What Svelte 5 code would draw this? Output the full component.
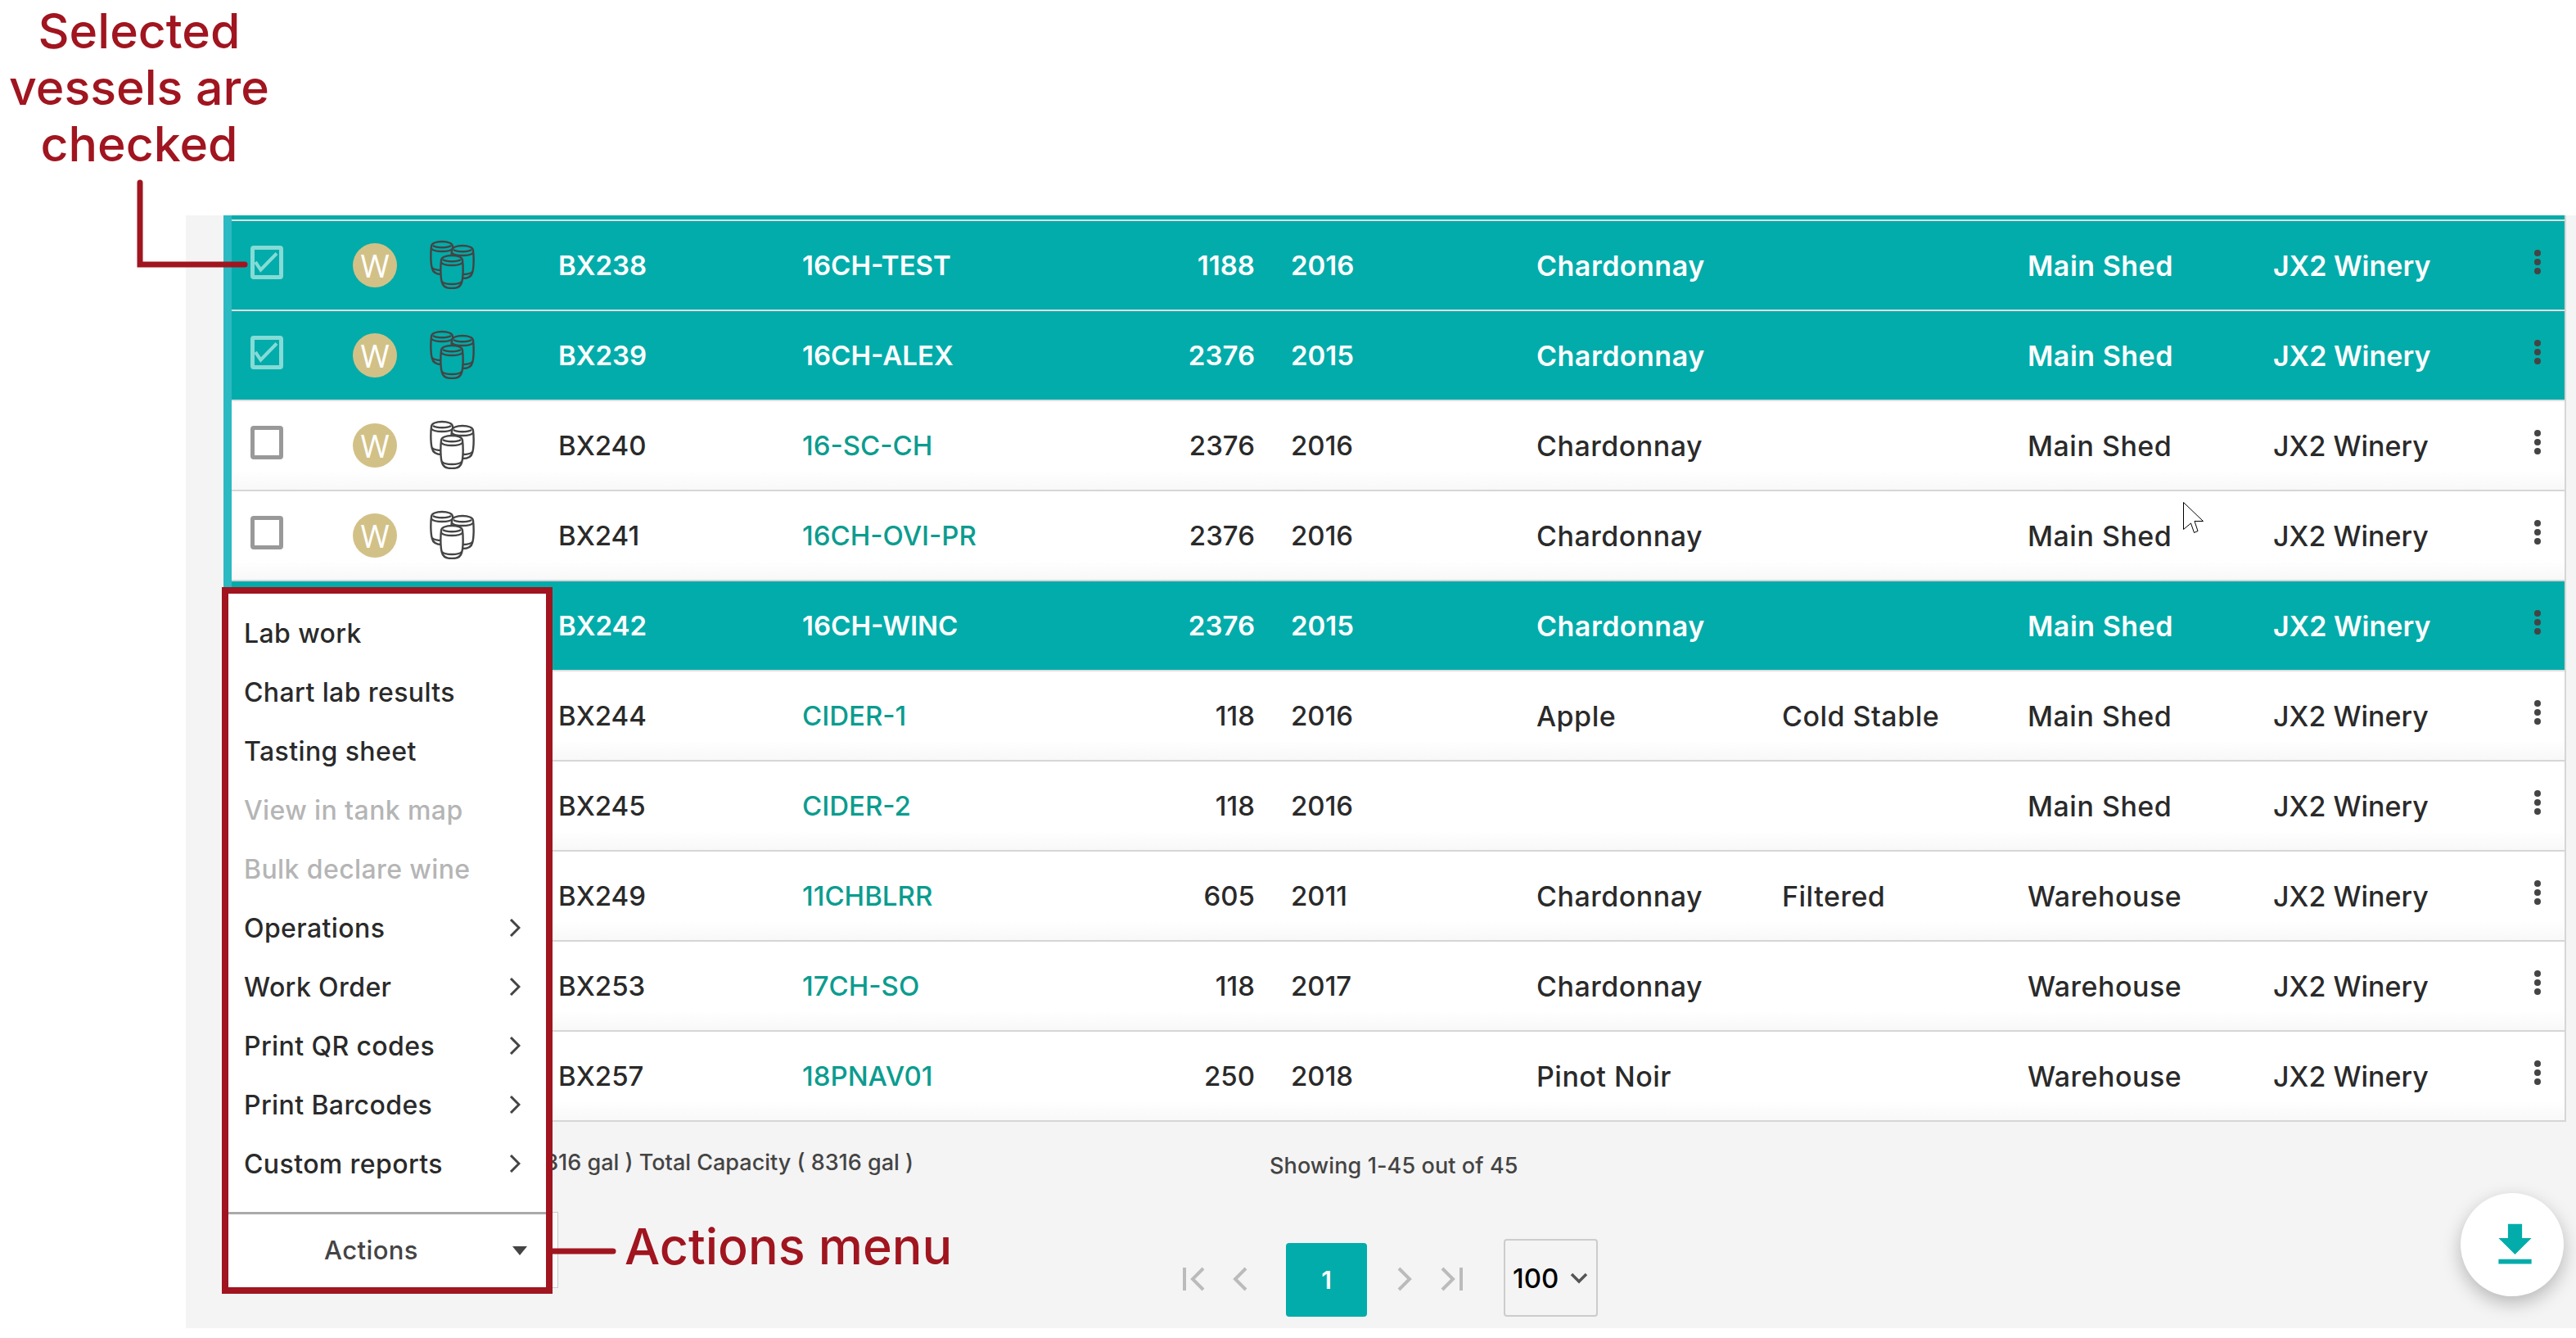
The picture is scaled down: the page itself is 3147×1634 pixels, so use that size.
<script>
  const vessels = [
    { id: 'BX238', name: '16CH-TEST', qty: 1188, year: 2016, variety: 'Chardonnay', state: '', place: 'Main Shed', sel: true },
    { id: 'BX239', name: '16CH-ALEX', qty: 2376, year: 2015, variety: 'Chardonnay', state: '', place: 'Main Shed', sel: true },
    { id: 'BX240', name: '16-SC-CH', qty: 2376, year: 2016, variety: 'Chardonnay', state: '', place: 'Main Shed' },
    { id: 'BX241', name: '16CH-OVI-PR', qty: 2376, year: 2016, variety: 'Chardonnay', state: '', place: 'Main Shed' },
    { id: 'BX242', name: '16CH-WINC', qty: 2376, year: 2015, variety: 'Chardonnay', state: '', place: 'Main Shed', sel: true },
    { id: 'BX244', name: 'CIDER-1', qty: 118, year: 2016, variety: 'Apple', state: 'Cold Stable', place: 'Main Shed' },
    { id: 'BX245', name: 'CIDER-2', qty: 118, year: 2016, variety: '', state: '', place: 'Main Shed' },
    { id: 'BX249', name: '11CHBLRR', qty: 605, year: 2011, variety: 'Chardonnay', state: 'Filtered', place: 'Warehouse' },
    { id: 'BX253', name: '17CH-SO', qty: 118, year: 2017, variety: 'Chardonnay', state: '', place: 'Warehouse' },
    { id: 'BX257', name: '18PNAV01', qty: 250, year: 2018, variety: 'Pinot Noir', state: '', place: 'Warehouse' }
  ];

  const menuItems = [
    { label: 'Lab work' },
    { label: 'Chart lab results' },
    { label: 'Tasting sheet' },
    { label: 'View in tank map', off: true },
    { label: 'Bulk declare wine', off: true },
    { label: 'Operations', sub: true },
    { label: 'Work Order', sub: true },
    { label: 'Print QR codes', sub: true },
    { label: 'Print Barcodes', sub: true },
    { label: 'Custom reports', sub: true }
  ];

  // offsets of the three barrels inside the icon
  const barrels = [[0, 1], [25, 6], [12, 18]];
</script>

<div class="page">
  <div class="panel">
    <div class="table">
      <div class="band"></div>
      {#each vessels as v}
        <div class="row" class:sel={v.sel}>
          <div class="cell-check">
            <span class="check">
              {#if v.sel}
                <svg width="40" height="41" viewBox="0 0 40 41"><path d="M6 20l6.500 9.500L32 9.500" /></svg>
              {/if}
            </span>
          </div>
          <div><span class="badge">W</span></div>
          <div>
            <svg class="barrels" width="55" height="60" viewBox="0 0 55 60">
              {#each barrels as [x, y]}
                <g transform="translate({x} {y})">
                  <path d="M2 7C1 15 1 28 3 34C4 39 9 41 15 41C21 41 26 39 27 34C29 28 29 15 28 7C28 3 22 1 15 1C8 1 2 3 2 7Z" />
                  <path d="M2.500 10C6 14 24 14 27.500 10M3 33C7 37 23 37 27 33M4 6C8 9 22 9 26 6" />
                </g>
              {/each}
            </svg>
          </div>
          <div class="num">{v.id}</div>
          <div class="name num">{v.name}</div>
          <div class="num qty">{v.qty}</div>
          <div class="num">{v.year}</div>
          <div>{v.variety}</div>
          <div>{v.state}</div>
          <div>{v.place}</div>
          <div class="owner">JX2 Winery</div>
          <div class="cell-dots">
            <svg width="8" height="30" viewBox="0 0 8 30"><circle cx="4" cy="4" r="4" /><circle cx="4" cy="15" r="4" /><circle cx="4" cy="26" r="4" /></svg>
          </div>
        </div>
      {/each}
    </div>

    <div class="summary">
      <div class="total">( 8316 gal ) Total Capacity ( 8316 gal )</div>
      <div class="showing">Showing 1-45 out of 45</div>
    </div>

    <div class="pager">
      <svg class="pg first" width="27" height="30" viewBox="0 0 27 30"><path d="M2 1v28M25 2L12 15l13 13" /></svg>
      <svg class="pg prev" width="18" height="30" viewBox="0 0 18 30"><path d="M16 2L3 15l13 13" /></svg>
      <div class="current">1</div>
      <svg class="pg next" width="18" height="30" viewBox="0 0 18 30"><path d="M2 2l13 13L2 28" /></svg>
      <svg class="pg last" width="27" height="30" viewBox="0 0 27 30"><path d="M25 1v28M2 2l13 13L2 28" /></svg>
      <div class="size">100
        <svg width="22" height="14" viewBox="0 0 22 14"><path d="M2 2l9 9 9-9" /></svg>
      </div>
    </div>

    <button class="fab" aria-label="Download">
      <svg width="69" height="69" viewBox="0 0 24 24"><path d="M19 9h-4V3H9v6H5l7 7 7-7zM5 18v2h14v-2H5z" /></svg>
    </button>
  </div>

  <div class="actions">
    <ul class="menu">
      {#each menuItems as item}
        <li class:off={item.off}>
          {item.label}
          {#if item.sub}
            <svg width="14" height="22" viewBox="0 0 14 22"><path d="M2 1l10 10L2 21" /></svg>
          {/if}
        </li>
      {/each}
    </ul>
    <div class="actions-btn">
      <span>Actions</span>
      <svg width="18" height="11" viewBox="0 0 18 11"><path d="M0 0h18L9 11z" /></svg>
    </div>
  </div>

  <div class="note note-selected">Selected<br />vessels are<br />checked</div>
  <svg class="lead lead-selected" width="140" height="110" viewBox="0 0 140 110"><path d="M4 4v100h128" /></svg>
  <svg class="lead lead-actions" width="80" height="12" viewBox="0 0 80 12"><path d="M0 6h74" /></svg>
  <div class="note note-actions">Actions menu</div>

  <svg class="cursor" width="27" height="40" viewBox="0 0 27 40"><path d="M.5.500v33l9-7.500 4 11.500 4.500-2-4-12h10.500z" /></svg>
</div>

<style>
  :global(body) {
    background: #fff;
  }
  .page {
    position: relative;
    width: 3147px;
    height: 1634px;
    padding-top: 263px;
    box-sizing: border-box;
    overflow: hidden;
    font-family: Inter, "Liberation Sans", sans-serif;
    font-weight: 500;
    color: #2a2a2a;
  }
  .panel {
    position: relative;
    margin-left: 227px;
    height: 1359px;
    padding: 0 12px 0 46px;
    box-sizing: border-box;
    background: #f4f4f4;
  }
  .table {
    border-left: 10px solid #2bb9c2;
    border-right: 2px solid #d6d6d6;
    font-size: 34px;
    letter-spacing: 0.5px;
  }
  .band {
    height: 7px;
    background: #02acaa;
    border-bottom: 2px solid #dedede;
    box-sizing: border-box;
  }
  .row {
    display: grid;
    grid-template-columns: 148px 94px 157px 298px 300px 297px 300px 300px 300px 300px 293px 1fr;
    align-items: center;
    height: 110px;
    box-sizing: border-box;
    border-bottom: 2px solid #d6d6d6;
    background: linear-gradient(#fff 78%, #f8f8f8);
    white-space: nowrap;
  }
  .row.sel {
    background: #02acaa;
    color: #fff;
    font-weight: 600;
    border-bottom-color: #dedede;
  }
  .num {
    font-size: 33px;
    letter-spacing: 0;
  }
  .owner {
    letter-spacing: 0;
  }
  .cell-check {
    padding-left: 23px;
    margin-top: -8px;
    height: 41px;
  }
  .check {
    display: block;
    position: relative;
    width: 40px;
    height: 41px;
    box-sizing: border-box;
    border: 5px solid #999;
    border-radius: 4px;
    background: #fff;
  }
  .sel .check {
    border-color: #85dbd6;
    background: none;
  }
  .check svg {
    position: absolute;
    left: -5px;
    top: -5px;
  }
  .check path {
    fill: none;
    stroke: #85dbd6;
    stroke-width: 4;
  }
  .badge {
    display: block;
    width: 54px;
    height: 54px;
    border-radius: 50%;
    background: #d2c187;
    color: #fff;
    font-family: "Open Sans", sans-serif;
    font-size: 38px;
    font-weight: 400;
    letter-spacing: 0;
    line-height: 54px;
    text-align: center;
  }
  .barrels {
    display: block;
    margin-top: -2px;
  }
  .barrels path {
    fill: #fff;
    stroke: #444;
    stroke-width: 2.400;
  }
  .barrels path + path {
    fill: none;
  }
  .sel .barrels path {
    fill: #02acaa;
  }
  .sel .barrels path + path {
    fill: none;
  }
  .name {
    color: #0b9c8f;
  }
  .sel .name {
    color: #fff;
  }
  .qty {
    padding-right: 44px;
    text-align: right;
  }
  .cell-dots svg {
    display: block;
    margin: -8px 0 0 26px;
  }
  .cell-dots circle {
    fill: #444;
  }
  .summary {
    display: flex;
    align-items: center;
    height: 100px;
    font-size: 27px;
    color: #444;
    white-space: nowrap;
  }
  .total {
    width: 843px;
    text-align: right;
    margin-top: -2px;
  }
  .showing {
    margin-left: 435px;
    margin-top: 7px;
    letter-spacing: 0.1px;
  }
  .pager {
    display: flex;
    align-items: flex-end;
    margin-top: 43px;
    padding-left: 1172px;
    height: 95px;
  }
  .pg {
    margin-bottom: 31px;
  }
  .pg path {
    fill: none;
    stroke: #bbb;
    stroke-width: 4;
  }
  .prev {
    margin-left: 34px;
  }
  .next {
    margin-left: 37px;
  }
  .last {
    margin-left: 35px;
  }
  .current {
    width: 99px;
    height: 90px;
    margin-left: 47px;
    border-radius: 4px;
    background: #02acaa;
    color: #fff;
    font-size: 30px;
    font-weight: 600;
    line-height: 90px;
    text-align: center;
  }
  .size {
    display: flex;
    align-items: center;
    gap: 14px;
    width: 115px;
    height: 95px;
    margin-left: 50px;
    padding-left: 9px;
    box-sizing: border-box;
    border: 2px solid #ccc;
    border-radius: 4px;
    color: #000;
    font-size: 33px;
  }
  .size path {
    fill: none;
    stroke: #555;
    stroke-width: 3.500;
  }
  .fab {
    position: absolute;
    left: 2779px;
    top: 1194px;
    width: 126px;
    height: 126px;
    padding: 0;
    border: none;
    border-radius: 50%;
    background: #fff;
    box-shadow: 0 8px 22px rgba(0, 0, 0, 0.25);
  }
  .fab svg {
    display: block;
    margin: 0 auto;
    transform: translateX(3px);
  }
  .fab path {
    fill: #02acaa;
  }
  .actions {
    position: absolute;
    left: 271px;
    top: 717px;
    width: 404px;
    height: 863px;
    box-sizing: border-box;
    border: 8px solid #a0151f;
    background: #fff;
    font-size: 32px;
    letter-spacing: 0.4px;
  }
  .menu {
    list-style: none;
    height: 755px;
    margin: 0;
    padding: 12px 0 0;
    box-sizing: border-box;
  }
  .menu li {
    display: flex;
    align-items: center;
    justify-content: space-between;
    height: 72px;
    padding: 0 31px 0 19px;
    white-space: nowrap;
  }
  .menu .off {
    color: #b5b5b5;
  }
  .menu path {
    fill: none;
    stroke: #444;
    stroke-width: 3;
  }
  .actions-btn {
    position: relative;
    height: 93px;
    box-sizing: border-box;
    border-top: 3px solid #aaa;
    color: #444;
    font-size: 31px;
    text-align: center;
    line-height: 88px;
    padding-right: 1px;
  }
  .actions-btn span {
    position: relative;
    left: -19px;
  }
  .actions-btn svg {
    position: absolute;
    right: 23px;
    top: 39px;
  }
  .actions-btn path {
    fill: #444;
  }
  .actions-btn::after {
    content: "";
    position: absolute;
    left: 396px;
    top: -3px;
    width: 7px;
    height: 93px;
    box-sizing: border-box;
    border: 1px solid #ccc;
    border-left: none;
    background: #fbfbfb;
  }
  .note {
    position: absolute;
    color: #a0151f;
    font-size: 59px;
    line-height: 69px;
    font-weight: 500;
    text-align: center;
    white-space: nowrap;
  }
  .note-selected {
    left: 0;
    top: 3px;
    width: 340px;
  }
  .note-actions {
    left: 763px;
    top: 1488px;
    font-size: 61px;
  }
  .lead {
    position: absolute;
  }
  .lead path {
    fill: none;
    stroke: #a0151f;
    stroke-width: 7;
    stroke-linecap: round;
  }
  .lead-selected {
    left: 167px;
    top: 219px;
  }
  .lead-actions {
    left: 675px;
    top: 1522px;
  }
  .cursor {
    position: absolute;
    left: 2667px;
    top: 613px;
  }
  .cursor path {
    fill: #fff;
    stroke: #000;
    stroke-width: 1;
  }
</style>
